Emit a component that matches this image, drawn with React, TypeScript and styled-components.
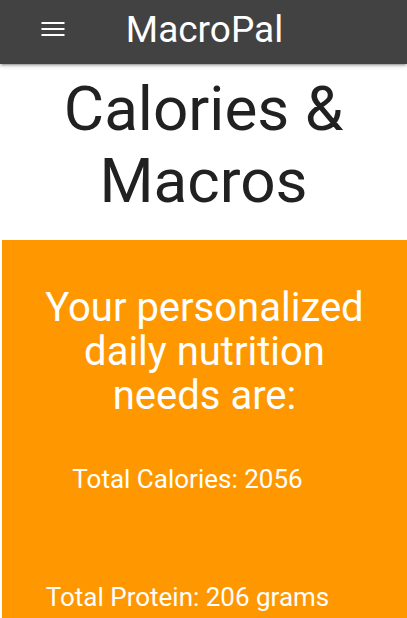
import React from "react";
import styled, { createGlobalStyle } from "styled-components";

const Global = createGlobalStyle`
  html, body { margin: 0; padding: 0; background: #ffffff; }
  body { font-family: Roboto, "Noto Sans", "Liberation Sans", sans-serif; overflow: hidden; }
`;

const Page = styled.div`
  width: 407px;
  height: 618px;
  overflow: hidden;
  display: flex;
  flex-direction: column;
`;

const NavBar = styled.header`
  position: relative;
  z-index: 1;
  height: 64px;
  flex: 0 0 64px;
  background: #424242;
  box-shadow: 0 2px 2px 0 rgba(0,0,0,0.14), 0 3px 1px -2px rgba(0,0,0,0.12), 0 1px 5px 0 rgba(0,0,0,0.2);
  display: grid;
  grid-template-columns: 1fr auto 1fr;
  align-items: center;
`;

const MenuButton = styled.button`
  justify-self: start;
  margin-left: 38px;
  margin-bottom: 6px;
  width: 30px;
  height: 30px;
  padding: 0;
  border: 0;
  background: transparent;
  display: flex;
  align-items: center;
  justify-content: center;
`;

const Brand = styled.div`
  color: #ffffff;
  font-size: 37px;
  line-height: 60px;
  height: 60px;
  margin-bottom: 4px;
  padding-left: 2px;
`;

const Heading = styled.h1`
  margin: 9px 0 23px 0;
  font-weight: 400;
  font-size: 62px;
  line-height: 72px;
  color: #212121;
  text-align: center;
`;

const Card = styled.section`
  margin-left: 2px;
  flex: 1 0 auto;
  background: #ff9800;
  padding-top: 46px;
  display: flex;
  flex-direction: column;
  align-items: center;
`;

const Intro = styled.h2`
  margin: 0;
  font-weight: 400;
  font-size: 40px;
  line-height: 44px;
  color: #ffffff;
  text-align: center;
  width: 330px;
`;

const Totals = styled.div`
  align-self: stretch;
  padding-right: 34px;
  display: flex;
  flex-direction: column;
  align-items: center;
`;

const Total = styled.p<{ $gap: number }>`
  margin: ${(p) => p.$gap}px 0 0 0;
  font-size: 26px;
  line-height: 30px;
  color: #ffffff;
  text-align: center;
`;

const MenuIcon = () => (
  <svg width="24" height="16" viewBox="0 0 24 16">
    <rect x="0.5" y="1" width="23" height="2" fill="#fff" />
    <rect x="0.5" y="7" width="23" height="2" fill="#fff" />
    <rect x="0.5" y="13" width="23" height="2" fill="#fff" />
  </svg>
);

export default function App() {
  return (
    <Page>
      <Global />
      <NavBar>
        <MenuButton aria-label="menu">
          <MenuIcon />
        </MenuButton>
        <Brand>MacroPal</Brand>
        <span />
      </NavBar>
      <Heading>
        Calories &amp;
        <br />
        Macros
      </Heading>
      <Card>
        <Intro>Your personalized daily nutrition needs are:</Intro>
        <Totals>
          <Total $gap={46}>Total Calories: 2056</Total>
          <Total $gap={88}>Total Protein: 206 grams</Total>
        </Totals>
      </Card>
    </Page>
  );
}
